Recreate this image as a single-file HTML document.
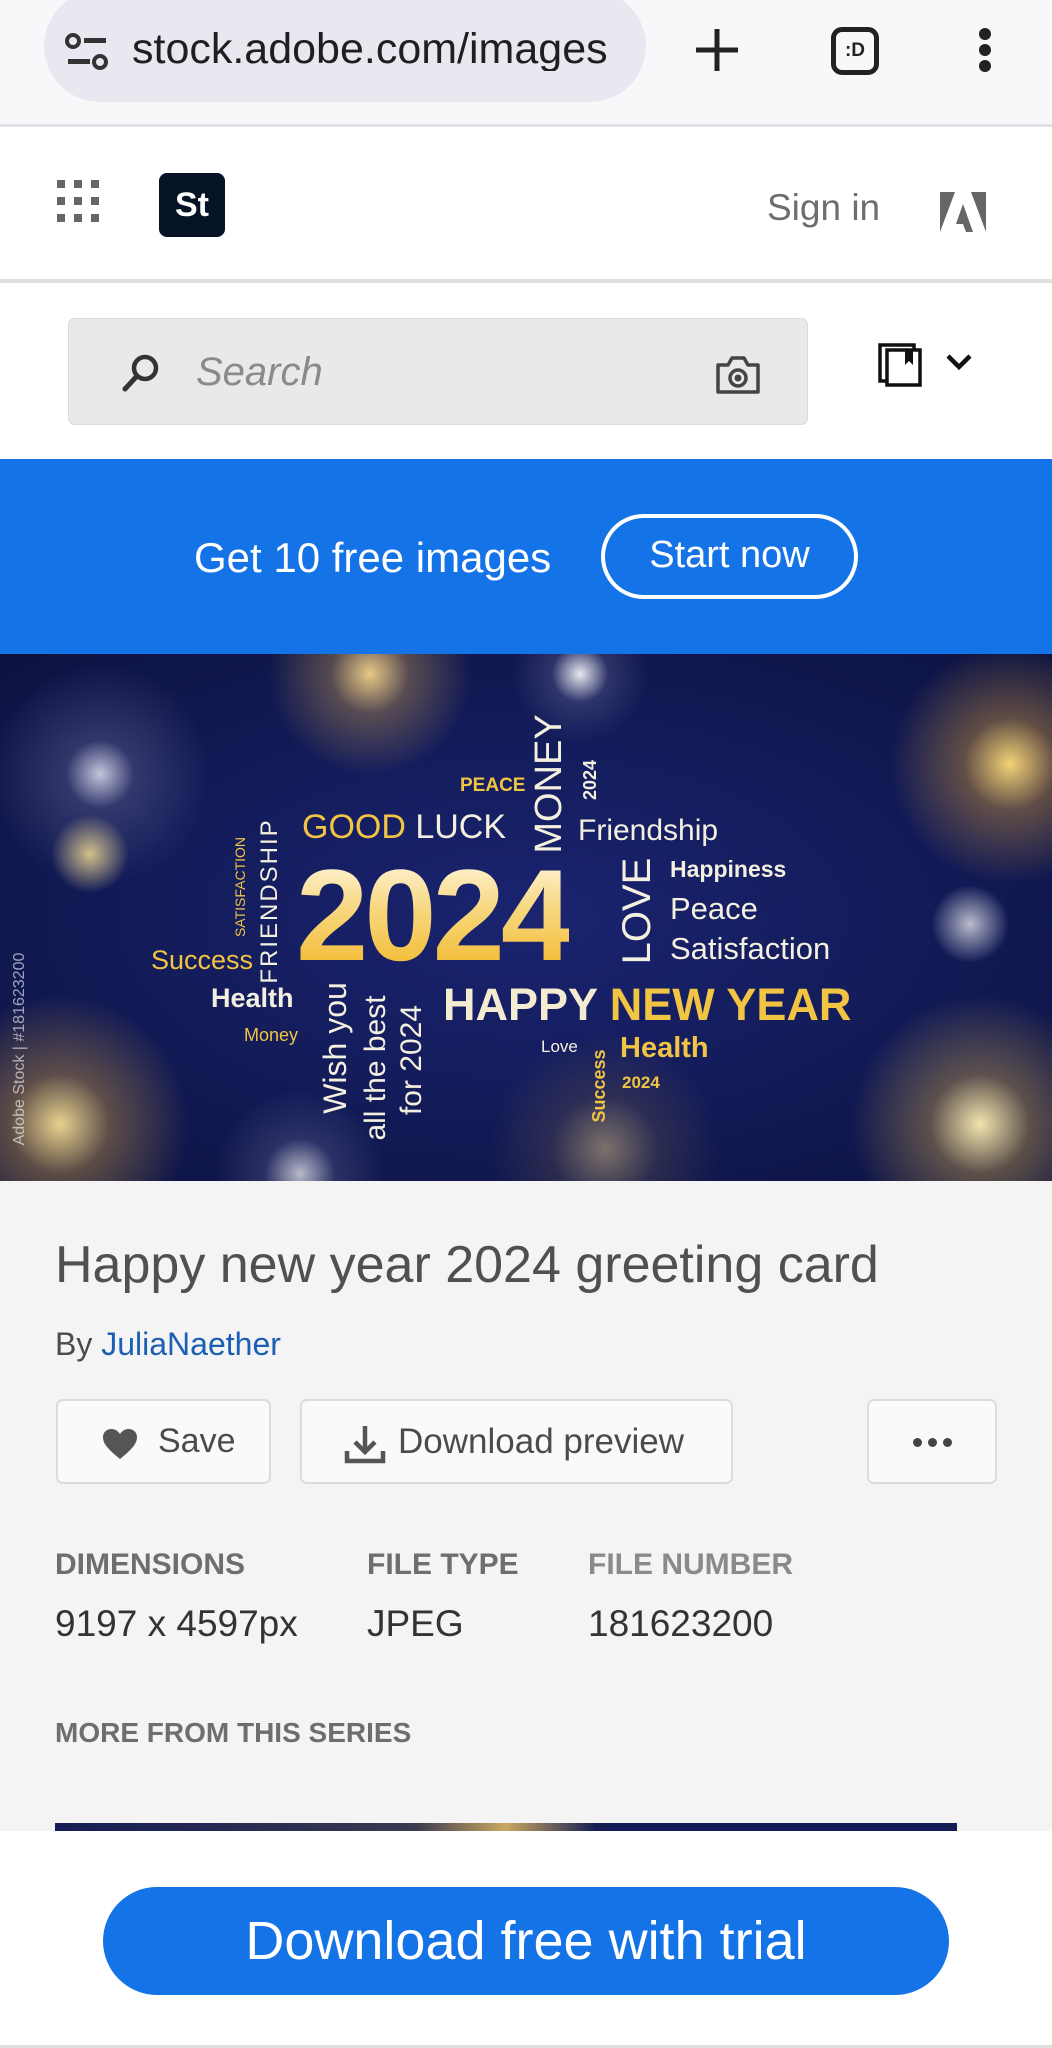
<!DOCTYPE html>
<html><head><meta charset="utf-8"><style>
*{margin:0;padding:0;box-sizing:border-box}
body{width:1052px;height:2048px;overflow:hidden;background:#f4f4f4;font-family:"Liberation Sans",sans-serif;position:relative}
.a{position:absolute}
.v{position:absolute;transform:translate(-50%,-50%) rotate(-90deg);white-space:nowrap;line-height:1}
.w{position:absolute;white-space:nowrap;line-height:1}
.g{color:#f2c443}.wh{color:#f4f0e0}
</style></head><body>
<div class="a" style="left:0;top:0;width:1052px;height:125px;background:#f8f8fb"></div>
<div class="a" style="left:44px;top:-10px;width:602px;height:112px;border-radius:56px;background:#e8e9f0"></div>
<svg class="a" style="left:64px;top:32px" width="46" height="40" viewBox="0 0 46 40"><circle cx="9" cy="9" r="6" fill="none" stroke="#333" stroke-width="4"/><rect x="20" y="6" width="22" height="5" fill="#333"/><rect x="4" y="27" width="22" height="5" fill="#333"/><circle cx="36" cy="30" r="6" fill="none" stroke="#333" stroke-width="4"/></svg>
<div class="w" style="left:132px;top:28px;font-size:43px;color:#1f1f1f;width:494px;overflow:hidden">stock.adobe.com/images</div>
<svg class="a" style="left:694px;top:27px" width="46" height="46"><path d="M23 2V44M2 23H44" stroke="#222" stroke-width="5"/></svg>
<div class="a" style="left:831px;top:27px;width:48px;height:48px;border:5px solid #222;border-radius:11px;font-size:19px;font-weight:bold;color:#222;text-align:center;line-height:38px">:D</div>
<div class="a" style="left:979px;top:28px;width:12px;height:12px;border-radius:6px;background:#222"></div>
<div class="a" style="left:979px;top:44px;width:12px;height:12px;border-radius:6px;background:#222"></div>
<div class="a" style="left:979px;top:60px;width:12px;height:12px;border-radius:6px;background:#222"></div>
<div class="a" style="left:0;top:124px;width:1052px;height:3px;background:#e2e2e6"></div>
<div class="a" style="left:0;top:127px;width:1052px;height:152px;background:#fff"></div>
<svg class="a" style="left:57px;top:180px" width="42" height="42"><g fill="#666"><rect x="0" y="0" width="8" height="8"/><rect x="17" y="0" width="8" height="8"/><rect x="34" y="0" width="8" height="8"/><rect x="0" y="17" width="8" height="8"/><rect x="17" y="17" width="8" height="8"/><rect x="34" y="17" width="8" height="8"/><rect x="0" y="34" width="8" height="8"/><rect x="17" y="34" width="8" height="8"/><rect x="34" y="34" width="8" height="8"/></g></svg>
<div class="a" style="left:159px;top:173px;width:66px;height:64px;background:#061325;border-radius:8px;color:#fff;font-weight:bold;font-size:34px;text-align:center;line-height:64px">St</div>
<div class="w" style="left:767px;top:189px;font-size:37px;color:#6e6e6e">Sign in</div>
<svg class="a" style="left:940px;top:192px" width="46" height="40" viewBox="0 0 46 40"><path d="M0 0H15L0 40Z" fill="#666"/><path d="M31 0H46V40Z" fill="#666"/><path d="M23 12L33 40H26L23 32H16Z" fill="#666"/></svg>
<div class="a" style="left:0;top:279px;width:1052px;height:4px;background:#e0e0e0"></div>
<div class="a" style="left:0;top:283px;width:1052px;height:176px;background:#fff"></div>
<div class="a" style="left:68px;top:318px;width:740px;height:107px;background:#e9e9e9;border:1px solid #dadada;border-radius:7px"></div>
<svg class="a" style="left:120px;top:352px" width="42" height="42" viewBox="0 0 42 42"><circle cx="25" cy="16" r="11" fill="none" stroke="#333" stroke-width="4.5"/><path d="M17 24L5 37" stroke="#333" stroke-width="5" stroke-linecap="round"/></svg>
<div class="w" style="left:196px;top:352px;font-size:40px;font-style:italic;color:#8a8a8a">Search</div>
<svg class="a" style="left:714px;top:355px" width="48" height="40" viewBox="0 0 48 40"><path d="M4 10H14L18 3H30L34 10H44V37H4Z" fill="none" stroke="#444" stroke-width="3.5" stroke-linejoin="round"/><circle cx="24" cy="23" r="8" fill="none" stroke="#444" stroke-width="3.5"/><circle cx="24" cy="23" r="3.5" fill="#444"/></svg>
<svg class="a" style="left:878px;top:343px" width="46" height="44" viewBox="0 0 46 44"><rect x="2" y="2" width="34" height="36" fill="#fff" stroke="#111" stroke-width="3.5"/><rect x="9" y="7" width="33" height="35" fill="#fff" stroke="#111" stroke-width="3.5"/><path d="M27 7V22L31 18L35 22V7Z" fill="#111"/></svg>
<svg class="a" style="left:945px;top:352px" width="28" height="20"><path d="M3 4L14 15L25 4" fill="none" stroke="#111" stroke-width="4.5"/></svg>
<div class="a" style="left:0;top:459px;width:1052px;height:196px;background:#1473e6"></div>
<div class="w" style="left:194px;top:537px;font-size:42px;color:#fff">Get 10 free images</div>
<div class="a" style="left:601px;top:514px;width:257px;height:85px;border:4px solid #fff;border-radius:43px;color:#fff;font-size:38px;text-align:center;line-height:75px">Start now</div>
<div class="a" style="left:0;top:654px;width:1052px;height:527px;overflow:hidden;background:radial-gradient(ellipse at 50% 50%,#1a2470 0%,#121a55 60%,#0c1240 100%)">
 <div class="a" style="left:260px;top:-90px;width:220px;height:220px;border-radius:50%;background:radial-gradient(circle,rgba(255,220,140,.9) 0%,rgba(220,170,80,.35) 25%,rgba(0,0,0,0) 65%)"></div>
 <div class="a" style="left:-20px;top:0;width:240px;height:240px;border-radius:50%;background:radial-gradient(circle,rgba(240,240,255,.8) 0%,rgba(150,150,190,.25) 20%,rgba(0,0,0,0) 65%)"></div>
 <div class="a" style="left:880px;top:-20px;width:260px;height:260px;border-radius:50%;background:radial-gradient(circle,rgba(255,220,120,.95) 0%,rgba(220,160,60,.4) 25%,rgba(0,0,0,0) 65%)"></div>
 <div class="a" style="left:-80px;top:330px;width:280px;height:280px;border-radius:50%;background:radial-gradient(circle,rgba(255,230,150,.9) 0%,rgba(210,160,70,.4) 25%,rgba(0,0,0,0) 65%)"></div>
 <div class="a" style="left:840px;top:330px;width:280px;height:280px;border-radius:50%;background:radial-gradient(circle,rgba(255,240,180,.95) 0%,rgba(210,170,80,.4) 25%,rgba(0,0,0,0) 65%)"></div>
 <div class="a" style="left:500px;top:-60px;width:160px;height:160px;border-radius:50%;background:radial-gradient(circle,rgba(255,255,255,.9) 0%,rgba(160,160,200,.2) 25%,rgba(0,0,0,0) 60%)"></div>
 <div class="a" style="left:480px;top:370px;width:250px;height:250px;border-radius:50%;background:radial-gradient(circle,rgba(230,200,130,.5) 0%,rgba(150,120,70,.2) 30%,rgba(0,0,0,0) 65%)"></div>
 <div class="a" style="left:200px;top:420px;width:200px;height:200px;border-radius:50%;background:radial-gradient(circle,rgba(255,255,255,.7) 0%,rgba(150,150,190,.2) 25%,rgba(0,0,0,0) 60%)"></div>
 <div class="a" style="left:40px;top:150px;width:100px;height:100px;border-radius:50%;background:radial-gradient(circle,rgba(255,230,150,.8) 0%,rgba(0,0,0,0) 55%)"></div>
 <div class="a" style="left:920px;top:220px;width:100px;height:100px;border-radius:50%;background:radial-gradient(circle,rgba(255,255,255,.7) 0%,rgba(0,0,0,0) 55%)"></div>
</div>
<div class="w g" style="left:460px;top:776px;font-size:19px;font-weight:bold">PEACE</div>
<div class="w" style="left:302px;top:810px;font-size:34px;color:#f2c443">GOOD <span style="color:#f4f0e0">LUCK</span></div>
<div class="v wh" style="left:549px;top:784px;font-size:38px">MONEY</div>
<div class="v wh" style="left:590px;top:780px;font-size:18px;font-weight:bold">2024</div>
<div class="w wh" style="left:578px;top:816px;font-size:30px">Friendship</div>
<div class="v g" style="left:240px;top:887px;font-size:14px">SATISFACTION</div>
<div class="v wh" style="left:270px;top:901px;font-size:24px;letter-spacing:2px">FRIENDSHIP</div>
<div class="w" style="left:296px;top:850px;font-size:130px;font-weight:bold;letter-spacing:-4px;background:linear-gradient(180deg,#fff8e6 0%,#f7d880 45%,#f2b624 100%);-webkit-background-clip:text;background-clip:text;color:transparent">2024</div>
<div class="v wh" style="left:637px;top:911px;font-size:40px">LOVE</div>
<div class="w wh" style="left:670px;top:858px;font-size:23px;font-weight:bold">Happiness</div>
<div class="w wh" style="left:670px;top:893px;font-size:31px">Peace</div>
<div class="w wh" style="left:670px;top:933px;font-size:31px">Satisfaction</div>
<div class="w g" style="left:151px;top:947px;font-size:27px">Success</div>
<div class="w wh" style="left:211px;top:985px;font-size:27px;font-weight:bold">Health</div>
<div class="w g" style="left:244px;top:1026px;font-size:18px">Money</div>
<div class="v wh" style="left:335px;top:1048px;font-size:32px">Wish you</div>
<div class="v wh" style="left:376px;top:1068px;font-size:30px">all the best</div>
<div class="v wh" style="left:412px;top:1060px;font-size:30px">for 2024</div>
<div class="w" style="left:443px;top:982px;font-size:45px;font-weight:bold;color:#f4ecd0">HAPPY <span style="color:#f2c443">NEW YEAR</span></div>
<div class="w wh" style="left:541px;top:1038px;font-size:17px">Love</div>
<div class="v g" style="left:599px;top:1086px;font-size:18px;font-weight:bold">Success</div>
<div class="w g" style="left:620px;top:1034px;font-size:29px;font-weight:bold">Health</div>
<div class="w g" style="left:622px;top:1074px;font-size:17px;font-weight:bold">2024</div>
<div class="v" style="left:20px;top:1049px;font-size:16px;color:rgba(255,255,255,.6)">Adobe Stock | #181623200</div>
<div class="w" style="left:55px;top:1239px;font-size:52px;color:#505050">Happy new year 2024 greeting card</div>
<div class="w" style="left:55px;top:1328px;font-size:32px;color:#4b4b4b">By <span style="color:#1a5fb4">JuliaNaether</span></div>
<div class="a" style="left:56px;top:1399px;width:215px;height:85px;background:#fafafa;border:2px solid #dcdcdc;border-radius:7px"></div>
<svg class="a" style="left:102px;top:1428px" width="36" height="32" viewBox="0 0 36 32"><path d="M18 31C6 21 1 16 1 9C1 4 5 1 9.5 1C13 1 16 3 18 6C20 3 23 1 26.5 1C31 1 35 4 35 9C35 16 30 21 18 31Z" fill="#555"/></svg>
<div class="w" style="left:158px;top:1424px;font-size:34px;color:#4b4b4b">Save</div>
<div class="a" style="left:300px;top:1399px;width:433px;height:85px;background:#fafafa;border:2px solid #dcdcdc;border-radius:7px"></div>
<svg class="a" style="left:344px;top:1424px" width="42" height="40" viewBox="0 0 42 40"><path d="M21 2V27M11 18L21 28L31 18" fill="none" stroke="#555" stroke-width="4.5"/><path d="M3 27V37H39V27" fill="none" stroke="#555" stroke-width="4.5"/></svg>
<div class="w" style="left:398px;top:1424px;font-size:35px;color:#4b4b4b">Download preview</div>
<div class="a" style="left:867px;top:1399px;width:130px;height:85px;background:#fafafa;border:2px solid #dcdcdc;border-radius:7px"></div>
<div class="a" style="left:913px;top:1438px;width:9px;height:9px;border-radius:5px;background:#444"></div>
<div class="a" style="left:928px;top:1438px;width:9px;height:9px;border-radius:5px;background:#444"></div>
<div class="a" style="left:943px;top:1438px;width:9px;height:9px;border-radius:5px;background:#444"></div>
<div class="w" style="left:55px;top:1550px;font-size:30px;font-weight:bold;color:#6e6e6e">DIMENSIONS</div>
<div class="w" style="left:367px;top:1550px;font-size:30px;font-weight:bold;color:#6e6e6e">FILE TYPE</div>
<div class="w" style="left:588px;top:1550px;font-size:30px;font-weight:bold;color:#8a8a8a">FILE NUMBER</div>
<div class="w" style="left:55px;top:1605px;font-size:37px;color:#333">9197 x 4597px</div>
<div class="w" style="left:367px;top:1605px;font-size:37px;color:#333">JPEG</div>
<div class="w" style="left:588px;top:1605px;font-size:37px;color:#333">181623200</div>
<div class="w" style="left:55px;top:1719px;font-size:28px;font-weight:bold;color:#6e6e6e">MORE FROM THIS SERIES</div>
<div class="a" style="left:55px;top:1823px;width:902px;height:8px;background:linear-gradient(90deg,#141c55,#3a3a50 40%,#c9a860 50%,#141c55 60%)"></div>
<div class="a" style="left:0;top:1831px;width:1052px;height:217px;background:#fff"></div>
<div class="a" style="left:103px;top:1887px;width:846px;height:108px;border-radius:54px;background:#1473e6;color:#fff;font-size:54px;text-align:center;line-height:108px">Download free with trial</div>
<div class="a" style="left:0;top:2045px;width:1052px;height:3px;background:#ddd"></div>
</body></html>
